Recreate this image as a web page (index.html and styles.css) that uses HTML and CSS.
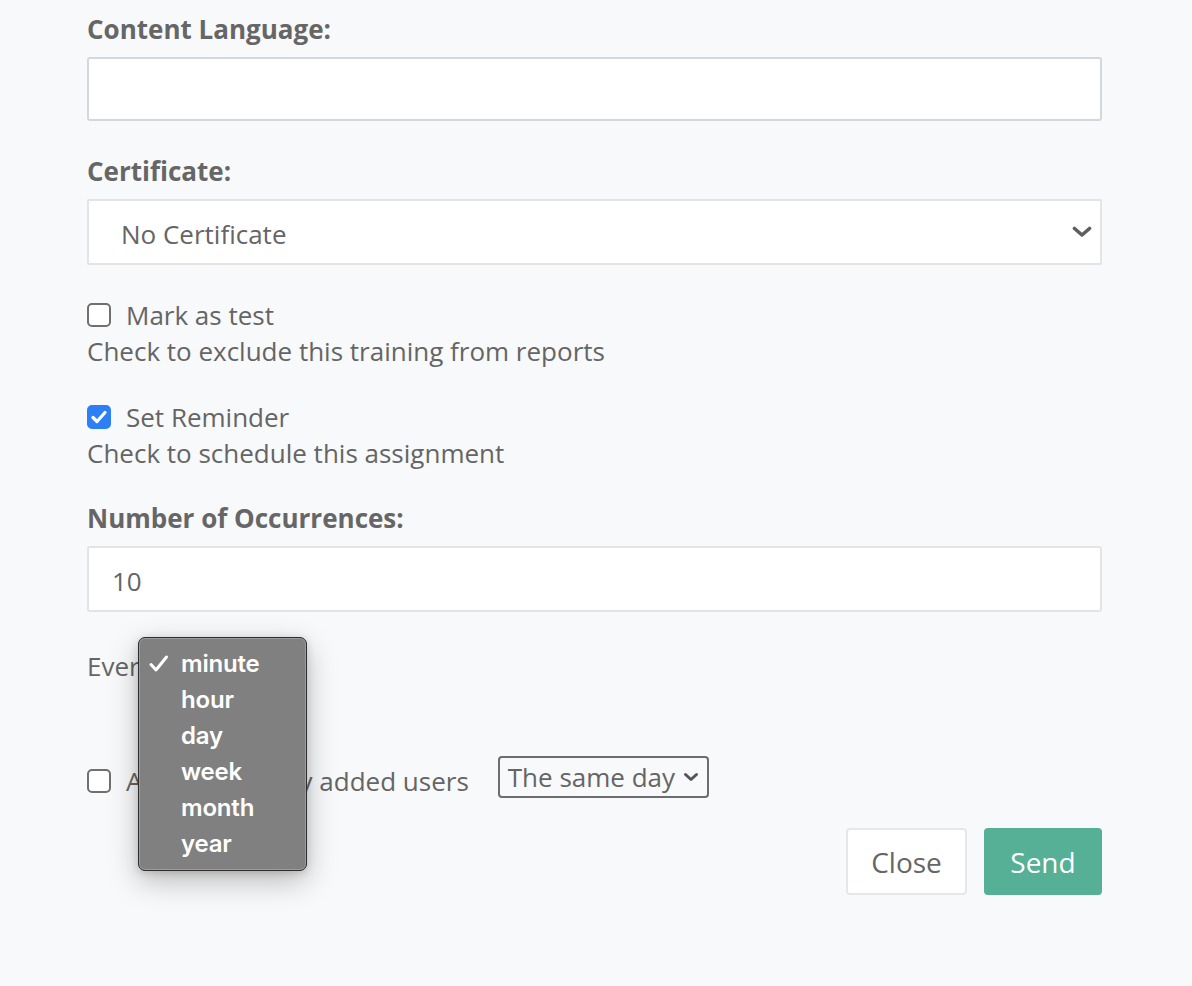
FILE: index.html
```html
<!DOCTYPE html>
<html>
<head>
<meta charset="utf-8">
<link rel="stylesheet" href="styles.css">
</head>
<body>
<form class="form">
  <div class="field">
    <label class="label">Content Language:</label>
    <div class="input"></div>
  </div>
  <div class="field">
    <label class="label">Certificate:</label>
    <div class="input select">
      <span>No Certificate</span>
      <svg class="chev" width="20" height="12" viewBox="0 0 20 12"><path d="M2.5 2.5 L10 9 L17.5 2.5" fill="none" stroke="#5f5f5f" stroke-width="3.6" stroke-linecap="round" stroke-linejoin="round"/></svg>
    </div>
  </div>
  <div class="check-group first">
    <div class="check-row"><span class="box"></span><span>Mark as test</span></div>
    <div class="help">Check to exclude this training from reports</div>
  </div>
  <div class="check-group second">
    <div class="check-row"><span class="box checked"><svg width="24" height="24" viewBox="0 0 24 24"><path d="M6 12.5 L10 16.5 L18 7.5" fill="none" stroke="#fff" stroke-width="3.2" stroke-linecap="round" stroke-linejoin="round"/></svg></span><span>Set Reminder</span></div>
    <div class="help">Check to schedule this assignment</div>
  </div>
  <div class="field occ">
    <label class="label">Number of Occurrences:</label>
    <div class="input"><span class="val">10</span></div>
  </div>
  <div class="every-row">
    <span>Every</span>
    <ul class="menu">
      <li class="sel"><svg class="tick" width="22" height="22" viewBox="0 0 22 22"><path d="M3 11.5 L8 17 L18.5 4" fill="none" stroke="#fff" stroke-width="3" stroke-linecap="round" stroke-linejoin="round"/></svg>minute</li>
      <li>hour</li>
      <li>day</li>
      <li>week</li>
      <li>month</li>
      <li>year</li>
    </ul>
  </div>
  <div class="check-row assign">
    <span class="box"></span><span>Assign to newly added users</span>
    <div class="mini-select"><span>The same day</span><svg width="16" height="10" viewBox="0 0 16 10"><path d="M2.5 2.5 L8 7.5 L13.5 2.5" fill="none" stroke="#555" stroke-width="3" stroke-linecap="round" stroke-linejoin="round"/></svg></div>
  </div>
  <div class="actions">
    <button type="button" class="btn close">Close</button>
    <button type="button" class="btn send">Send</button>
  </div>
</form>
</body>
</html>
```
FILE: styles.css
```css
* { box-sizing: border-box; }
html, body { margin: 0; padding: 0; background: #f8f9fa; }
body {
  font-family: "Open Sans", "Liberation Sans", sans-serif;
  font-size: 26px;
  color: #656565;
  width: 1192px;
  height: 986px;
  overflow: hidden;
}
.form {
  margin: 0 0 0 87px;
  width: 1015px;
  padding-top: 14px;
}
.field { display: flex; flex-direction: column; margin-bottom: 35px; }
.label {
  font-weight: 700;
  line-height: 30px;
  margin-bottom: 13px;
  color: #666;
}
.input {
  height: 64px;
  background: #fff;
  border: 2px solid #d3d8dd;
  border-radius: 3px;
  display: flex;
  align-items: center;
}
.select {
  height: 66px;
  border: 2px solid #e2e4e6;
  border-radius: 2px;
  padding: 3px 8px 0 32px;
  justify-content: space-between;
}
.select .chev { margin-top: -3px; }
.select span { line-height: 30px; }
.occ .input { border-color: #e2e4e6; height: 66px; padding-top: 3px; }
.val { padding-left: 23px; }
.field.occ { margin-bottom: 36px; }
.check-group { display: flex; flex-direction: column; margin-bottom: 30px; }
.check-group.first { margin-top: -3px; }
.check-group.second { margin-bottom: 32px; }
.check-row {
  display: flex;
  align-items: center;
  height: 36px;
  line-height: 36px;
}
.box {
  width: 24px;
  height: 24px;
  border: 2px solid #707070;
  border-radius: 5px;
  background: #fff;
  margin-right: 15px;
  flex: none;
  display: flex;
}
.box.checked { background: #2d7ff6; border-color: #2d7ff6; }
.box.checked svg { margin: -2px; }
.help { line-height: 36px; }
.every-row {
  position: relative;
  display: flex;
  align-items: center;
  height: 36px;
}
.menu {
  position: absolute;
  left: 51px;
  top: -11px;
  width: 169px;
  height: 234px;
  margin: 0;
  padding: 8px 0 0 0;
  list-style: none;
  background: #808080;
  border: 1px solid #2e2e2e;
  border-radius: 7px;
  box-shadow: 0 0 0 1px rgba(255,255,255,0.22) inset, 0 10px 30px rgba(0,0,0,0.25), 0 2px 8px rgba(0,0,0,0.15);
  z-index: 5;
  font-family: Inter, "Noto Sans", sans-serif;
  font-weight: 600;
  font-size: 24px;
  color: #fff;
}
.menu li {
  height: 36px;
  line-height: 36px;
  padding-left: 42px;
  position: relative;
  letter-spacing: -0.2px;
}
.tick {
  position: absolute;
  left: 9px;
  top: 7px;
}
.assign { margin-top: 79px; }
.mini-select {
  margin-left: 29px;
  margin-bottom: 8px;
  height: 42px;
  width: 211px;
  border: 2px solid #6d6d6d;
  border-radius: 4px;
  display: flex;
  align-items: center;
  justify-content: space-between;
  padding: 0 8px 0 8px;
  line-height: 30px;
}
.actions {
  display: flex;
  justify-content: flex-end;
  gap: 17px;
  margin-top: 29px;
}
.btn {
  font-family: "Open Sans", "Liberation Sans", sans-serif;
  font-size: 28px;
  height: 67px;
  border-radius: 4px;
  padding: 0;
  cursor: pointer;
}
.btn.close {
  width: 121px;
  background: #fff;
  border: 2px solid #e6e7e8;
  color: #666;
}
.btn.send {
  width: 118px;
  background: #55b096;
  border: none;
  color: #fff;
}
```
